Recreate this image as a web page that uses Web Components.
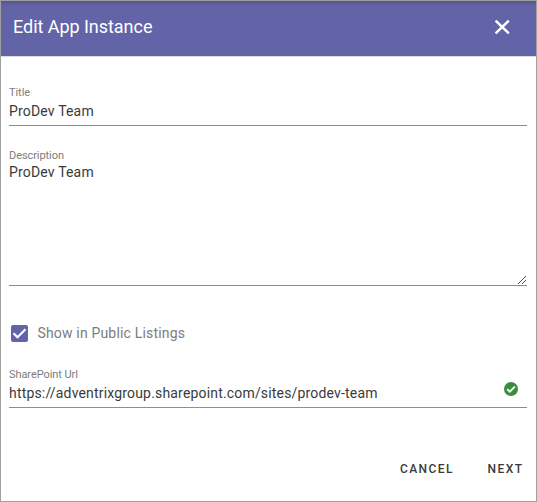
<!DOCTYPE html>
<html lang="en">
<head>
<meta charset="utf-8">
<title>Edit App Instance</title>
<style>
body { margin: 0; background: #fff; font-family: Roboto, "Liberation Sans", sans-serif; }
</style>
</head>
<body>
<app-dialog>
  <dialog-header slot="header">Edit App Instance</dialog-header>
  <form-field label="Title">ProDev Team</form-field>
  <form-field label="Description" multiline>ProDev Team</form-field>
  <check-option>Show in Public Listings</check-option>
  <form-field label="SharePoint Url" valid>https://adventrixgroup.sharepoint.com/sites/prodev-team</form-field>
  <action-button slot="actions">CANCEL</action-button>
  <action-button slot="actions">NEXT</action-button>
</app-dialog>
<script>
function define(name, html) {
  customElements.define(name, class extends HTMLElement {
    constructor() {
      super();
      this.attachShadow({ mode: 'open' }).innerHTML = html;
    }
    connectedCallback() {
      const label = this.shadowRoot.querySelector('label');
      if (label && this.hasAttribute('label')) label.textContent = this.getAttribute('label');
    }
  });
}

define('dialog-header', `
<style>
:host { display: flex; align-items: center; justify-content: space-between; box-sizing: border-box; height: 56px;
  padding: 0 26px 3px 12px; background: linear-gradient(#54558f, #6264a7 5px); color: #fff; border-bottom: 1px solid #dcdce0;
  font-size: 18px; line-height: 24px; letter-spacing: -.04px; }
svg { display: block; }
</style>
<span><slot></slot></span>
<svg width="16" height="16" viewBox="0 0 16 16"><path d="M1.6 1.6L14.8 14.4M14.8 1.6L1.6 14.4" stroke="#fff" stroke-width="2.5" fill="none"/></svg>`);

define('form-field', `
<style>
:host { display: flex; flex-direction: column; box-sizing: border-box; height: 41px; padding-top: 1px; border-bottom: 1px solid #8f8f8f; }
:host([multiline]) { height: 137px; margin-top: 23px; padding-top: 0; }
:host([valid]) { margin-top: 24px; }
label { font-size: 11px; line-height: 14px; letter-spacing: -.07px; color: #7c7c7c; }
.row { display: flex; align-items: center; justify-content: space-between; height: 20px; margin-top: 1px; padding-right: 9px; }
.value { font-size: 14px; line-height: 20px; letter-spacing: .175px; color: #3a3a3a; white-space: nowrap; }
:host([multiline]) .row { margin-top: -1px; }
svg { display: none; }
:host([valid]) .ok { display: block; margin-top: -9px; }
:host([multiline]) .grip { display: block; margin: auto 1px 1px auto; }
</style>
<label></label>
<div class="row"><span class="value"><slot></slot></span>
<svg class="ok" width="14" height="14" viewBox="0 0 14 14"><circle cx="7" cy="7" r="7" fill="#388e3c"/><path d="M3.2 7.1L5.8 9.6L10.8 4.6" stroke="#fff" stroke-width="1.9" fill="none"/></svg></div>
<svg class="grip" width="8" height="8" viewBox="0 0 8 8" shape-rendering="crispEdges"><path fill="#555" d="M0 7h1v1h-1zM1 6h1v1h-1zM2 5h1v1h-1zM3 4h1v1h-1zM4 3h1v1h-1zM5 2h1v1h-1zM6 1h1v1h-1zM7 0h1v1h-1zM4 7h1v1h-1zM5 6h1v1h-1zM6 5h1v1h-1zM7 4h1v1h-1z"/></svg>`);

define('check-option', `
<style>
:host { display: flex; align-items: center; gap: 9px; height: 20px; margin-top: 37px; padding-left: 2.4px;
  font-size: 14px; line-height: 20px; letter-spacing: .18px; color: #7c7c7c; }
svg { display: block; }
</style>
<svg width="17" height="17" viewBox="0 0 17 17"><rect width="17" height="17" rx="2" fill="#6264a7"/><path d="M2.5 8.3L6.5 12.2L14.5 4.2" stroke="#fff" stroke-width="2.2" fill="none"/></svg>
<span><slot></slot></span>`);

define('action-button', `
<style>
:host { display: block; font-size: 12px; font-weight: 500; line-height: 16px; letter-spacing: 1.45px; color: #3a3a3a; }
</style>
<slot></slot>`);

define('app-dialog', `
<style>
:host { display: flex; flex-direction: column; box-sizing: border-box; width: 537px; height: 502px; border: 1px solid #a0a0a0; background: #fff; }
main { display: flex; flex-direction: column; padding: 28px 9px 0 8px; }
footer { display: flex; justify-content: flex-end; gap: 33.5px; margin-top: auto; padding: 0 12.5px 24px 0; }
</style>
<slot name="header"></slot>
<main><slot></slot></main>
<footer><slot name="actions"></slot></footer>`);
</script>
</body>
</html>
